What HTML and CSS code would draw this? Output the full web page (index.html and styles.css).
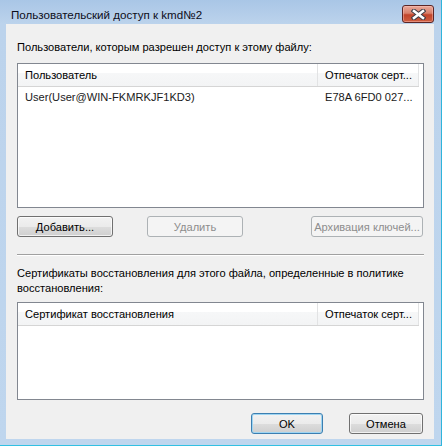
FILE: index.html
```html
<!DOCTYPE html>
<html lang="ru">
<head>
    <meta charset="UTF-8">
    <title>Пользовательский доступ к kmd№2</title>
    <link rel="stylesheet" href="styles.css">
</head>
<body>
    <div class="frame">
        <div class="titlebar">
            <span class="title">Пользовательский доступ к kmd№2</span>
            <button class="close" title="Закрыть">
                <svg width="15" height="11" viewBox="0 0 15 11">
                    <path d="M3 2 L12 9 M12 2 L3 9" stroke="#3b3b45" stroke-width="4.6" stroke-linecap="square"/>
                    <path d="M3 2 L12 9 M12 2 L3 9" stroke="#fff" stroke-width="2.6" stroke-linecap="square"/>
                </svg>
            </button>
        </div>
        <div class="client">
            <div class="label">Пользователи, которым разрешен доступ к этому файлу:</div>
            <div class="listview users">
                <div class="lv-header">
                    <div class="col col-main">Пользователь</div>
                    <div class="col col-thumb">Отпечаток серт...</div>
                </div>
                <div class="lv-row">
                    <div class="col col-main">User(User@WIN-FKMRKJF1KD3)</div>
                    <div class="col col-thumb">E78A 6FD0 027...</div>
                </div>
            </div>
            <div class="actions">
                <button class="btn btn-add">Добавить...</button>
                <button class="btn btn-remove" disabled>Удалить</button>
                <button class="btn btn-backup" disabled>Архивация ключей...</button>
            </div>
            <div class="separator"></div>
            <div class="label label-2">Сертификаты восстановления для этого файла, определенные в политике восстановления:</div>
            <div class="listview recovery">
                <div class="lv-header">
                    <div class="col col-main">Сертификат восстановления</div>
                    <div class="col col-thumb">Отпечаток серт...</div>
                </div>
            </div>
            <div class="footer">
                <button class="btn btn-ok">OK</button>
                <button class="btn btn-cancel">Отмена</button>
            </div>
        </div>
    </div>
</body>
</html>
```

FILE: styles.css
```css
body {
    margin: 0;
    font-family: 'Liberation Sans', Arial, sans-serif;
    font-size: 11.1px;
    color: #000;
    background: #b9d1ea;
}
.frame {
    width: 442px;
    height: 446px;
    box-sizing: border-box;
    display: flex;
    flex-direction: column;
    padding: 0 7px 6px 6px;
    background: linear-gradient(180deg, #a9c6e6 0px, #bcd3ec 24px, #bfd6ee 100%);
    border-right: 1px solid #2fb4dc;
    border-bottom: 1px solid #32c0e2;
}
.titlebar {
    height: 24px;
    flex: none;
    display: flex;
    align-items: flex-start;
}
.title {
    margin: 7px 0 0 5px;
    line-height: 15px;
    font-size: 11.6px;
    color: #0d0d1a;
}
.close {
    margin: 5px 0 0 auto;
    width: 32px;
    height: 18px;
    padding: 0;
    border: 1px solid #5b2626;
    border-radius: 3px;
    background: linear-gradient(180deg, #e9a99b 0%, #d8806b 45%, #c1442b 55%, #cf5e40 100%);
    box-shadow: inset 0 0 0 1px rgba(255, 200, 190, 0.45);
    display: flex;
    align-items: center;
    justify-content: center;
}
.client {
    flex: 1;
    background: #f0f0f0;
    padding: 16px 10px 0 11px;
    display: flex;
    flex-direction: column;
}
.label {
    line-height: 15px;
    color: #000;
}
.listview {
    margin-top: 8px;
    width: 407px;
    box-sizing: border-box;
    border: 1px solid #828790;
    background: #fff;
}
.users {
    height: 145px;
}
.recovery {
    margin-top: 6px;
    height: 98px;
}
.lv-header {
    display: flex;
    height: 22px;
    width: 401px;
    background: linear-gradient(180deg, #fff 0%, #fff 40%, #f6f7f8 41%, #f3f4f5 100%);
    border-bottom: 1px solid #d5d5d5;
}
.lv-header .col {
    line-height: 22px;
    border-right: 1px solid #e2e3e4;
}
.col {
    box-sizing: border-box;
    padding-left: 7px;
    white-space: nowrap;
    overflow: hidden;
}
.col-main {
    width: 300px;
}
.col-thumb {
    width: 101px;
}
.lv-row {
    display: flex;
    line-height: 20px;
    color: #1a1a1a;
}
.actions {
    display: flex;
    margin-top: 8px;
}
.btn {
    height: 21px;
    box-sizing: border-box;
    padding: 0;
    white-space: nowrap;
    font-family: inherit;
    font-size: 11.1px;
    color: #000;
    border: 1px solid #707070;
    border-radius: 3px;
    background: linear-gradient(180deg, #f2f2f2 0%, #ebebeb 50%, #dddddd 51%, #cfcfcf 100%);
    box-shadow: inset 0 0 0 1px rgba(255, 255, 255, 0.7);
}
.btn:disabled {
    color: #8d8d8d;
    border-color: #adb2b5;
    background: #f4f4f4;
    box-shadow: none;
}
.btn-add {
    width: 96px;
}
.btn-remove {
    width: 96px;
    margin-left: 34px;
}
.btn-backup {
    width: 112px;
    margin-left: 68px;
}
.separator {
    margin-top: 17px;
    width: 407px;
    height: 1px;
    background: #a0a0a0;
    border-bottom: 1px solid #fff;
}
.label-2 {
    margin-top: 10px;
    width: 407px;
}
.footer {
    display: flex;
    justify-content: flex-end;
    margin-top: 13px;
    padding-right: 1px;
}
.btn-ok {
    width: 72px;
    border-color: #3c7fb1;
    box-shadow: inset 0 0 0 1px #9fd5f2;
}
.btn-cancel {
    width: 74px;
    margin-left: 26px;
}
```
